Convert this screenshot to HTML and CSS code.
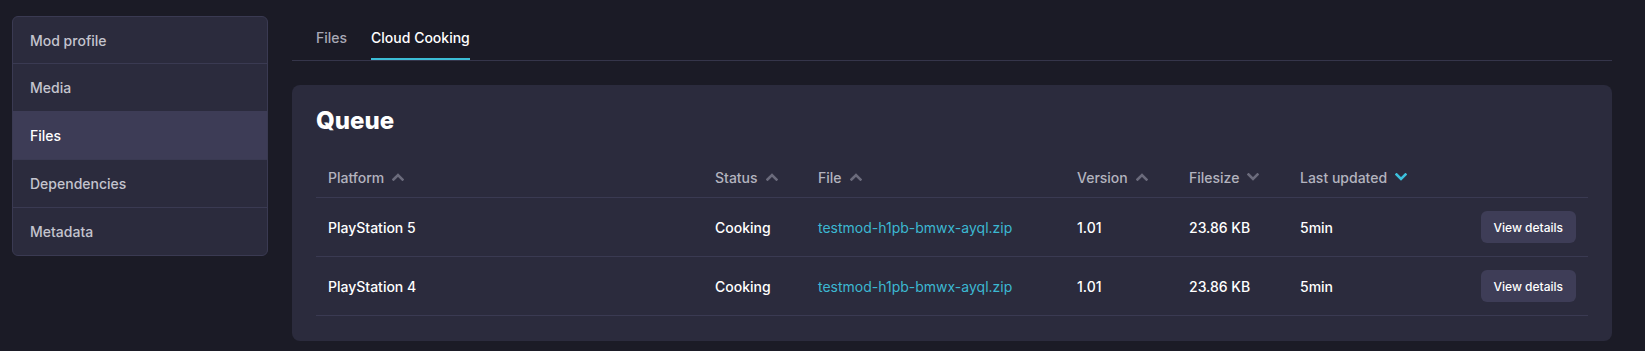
FILE: index.html
```html
<!DOCTYPE html>
<html>
<head>
<meta charset="utf-8">
<link rel="stylesheet" href="styles.css">
</head>
<body>
<div class="page">
  <nav class="sidebar">
    <div class="side-item">Mod profile</div>
    <div class="side-item">Media</div>
    <div class="side-item active">Files</div>
    <div class="side-item">Dependencies</div>
    <div class="side-item">Metadata</div>
  </nav>
  <main class="main">
    <div class="tabs">
      <div class="tab">Files</div>
      <div class="tab active">Cloud Cooking</div>
    </div>
    <section class="card">
      <h1 class="title">Queue</h1>
      <div class="table">
        <div class="row head">
          <div class="cell">Platform <svg class="chev" viewBox="0 0 12 8"><path d="M1.5 6.5 L6 2 L10.5 6.5"/></svg></div>
          <div class="cell">Status <svg class="chev" viewBox="0 0 12 8"><path d="M1.5 6.5 L6 2 L10.5 6.5"/></svg></div>
          <div class="cell">File <svg class="chev" viewBox="0 0 12 8"><path d="M1.5 6.5 L6 2 L10.5 6.5"/></svg></div>
          <div class="cell">Version <svg class="chev" viewBox="0 0 12 8"><path d="M1.5 6.5 L6 2 L10.5 6.5"/></svg></div>
          <div class="cell">Filesize <svg class="chev" viewBox="0 0 12 8"><path d="M1.5 1.5 L6 6 L10.5 1.5"/></svg></div>
          <div class="cell">Last updated <svg class="chev on" viewBox="0 0 12 8"><path d="M1.5 1.5 L6 6 L10.5 1.5"/></svg></div>
          <div class="cell"></div>
        </div>
        <div class="row">
          <div class="cell">PlayStation 5</div>
          <div class="cell">Cooking</div>
          <div class="cell"><span class="link">testmod-h1pb-bmwx-ayql.zip</span></div>
          <div class="cell">1.01</div>
          <div class="cell">23.86 KB</div>
          <div class="cell">5min</div>
          <div class="cell act"><button class="btn">View details</button></div>
        </div>
        <div class="row">
          <div class="cell">PlayStation 4</div>
          <div class="cell">Cooking</div>
          <div class="cell"><span class="link">testmod-h1pb-bmwx-ayql.zip</span></div>
          <div class="cell">1.01</div>
          <div class="cell">23.86 KB</div>
          <div class="cell">5min</div>
          <div class="cell act"><button class="btn">View details</button></div>
        </div>
      </div>
    </section>
  </main>
</div>
</body>
</html>
```

FILE: styles.css
```css
* { box-sizing: border-box; }
html, body {
  margin: 0;
  background: #1b1b26;
  font-family: Inter, "Liberation Sans", Arial, sans-serif;
  font-weight: 500;
  font-size: 14px;
  color: #ffffff;
}
.page {
  display: flex;
  align-items: flex-start;
  gap: 24px;
  padding: 16px 33px 0 12px;
}
.sidebar {
  width: 256px;
  flex: none;
  border: 1px solid #3a3a52;
  border-radius: 6px;
  background: #2b2b3d;
  overflow: hidden;
  display: flex;
  flex-direction: column;
}
.side-item {
  height: 48px;
  display: flex;
  align-items: center;
  padding-left: 17px;
  color: #c4c4ce;
  border-top: 1px solid #3a3a52;
}
.side-item:first-child { border-top: none; height: 46px; }
.side-item.active {
  background: #3d3c56;
  color: #ffffff;
  border-top-color: #3d3c56;
}
.main {
  flex: 1;
  display: flex;
  flex-direction: column;
}
.tabs {
  display: flex;
  gap: 24px;
  padding-left: 24px;
  border-bottom: 1px solid #35354a;
  height: 45px;
}
.tab {
  display: flex;
  align-items: center;
  padding-top: 1px;
  color: #a9a9b6;
  border-bottom: 2px solid transparent;
}
.tab.active {
  color: #ffffff;
  border-bottom-color: #3cbdd6;
}
.card {
  margin-top: 24px;
  background: #2b2b3d;
  border-radius: 8px;
  padding: 24px 24px 25px 24px;
}
.title {
  margin: 0 0 24px 0;
  font-size: 24px;
  line-height: 24px;
  font-weight: 800;
  color: #ffffff;
}
.table {
  display: flex;
  flex-direction: column;
}
.row {
  display: grid;
  grid-template-columns: 387px 103px 259px 112px 111px 1fr auto;
  align-items: center;
  height: 59px;
  border-bottom: 1px solid #3a3a52;
}
.row.head {
  height: 41px;
  color: #b3b3bf;
}
.cell {
  padding: 0 12px;
  display: flex;
  align-items: center;
  white-space: nowrap;
}
.chev {
  width: 12px;
  height: 8px;
  margin-left: 8px;
  fill: none;
  stroke: #6b6b7c;
  stroke-width: 2.6;
  stroke-linecap: square;
  stroke-linejoin: miter;
}
.chev.on { stroke: #3cc0dc; }
.link {
  color: #3cb8d2;
  font-weight: 400;
}
.act { justify-content: flex-end; }
.btn {
  height: 32px;
  padding: 0 13px;
  border: none;
  border-radius: 6px;
  background: #3e3d57;
  color: #ffffff;
  font-family: Inter, "Liberation Sans", Arial, sans-serif;
  font-weight: 500;
  font-size: 12px;
}
```
